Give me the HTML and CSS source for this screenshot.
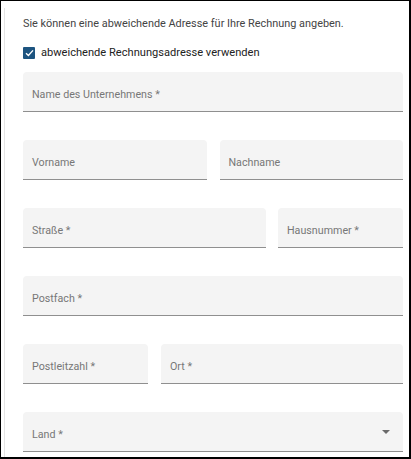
FILE: index.html
```html
<!DOCTYPE html>
<html lang="de">
<head>
    <meta charset="UTF-8">
    <meta name="viewport" content="width=device-width, initial-scale=1.0">
    <title>Rechnungsadresse</title>
    <link rel="stylesheet" href="styles.css">
</head>
<body>
    <div class="frame">
        <div class="card">
            <p class="intro">Sie können eine abweichende Adresse für Ihre Rechnung angeben.</p>
            <label class="check">
                <span class="box">
                    <svg width="9" height="8" viewBox="0 0 9 8"><path d="M1 4.2 L3.4 6.4 L8 1.4" fill="none" stroke="#fff" stroke-width="1.4"/></svg>
                </span>
                abweichende Rechnungsadresse verwenden
            </label>

            <div class="row">
                <div class="field">Name des Unternehmens *</div>
            </div>
            <div class="row half">
                <div class="field">Vorname</div>
                <div class="field">Nachname</div>
            </div>
            <div class="row street">
                <div class="field">Straße *</div>
                <div class="field">Hausnummer *</div>
            </div>
            <div class="row">
                <div class="field">Postfach *</div>
            </div>
            <div class="row city">
                <div class="field">Postleitzahl *</div>
                <div class="field">Ort *</div>
            </div>
            <div class="row">
                <div class="field select">
                    Land *
                    <span class="arrow"></span>
                </div>
            </div>
        </div>
    </div>
</body>
</html>
```

FILE: styles.css
```css
* {
    margin: 0;
    padding: 0;
    box-sizing: border-box;
}

body {
    font-family: Roboto, 'Liberation Sans', Arial, sans-serif;
    background: #fff;
}

.frame {
    width: 411px;
    height: 459px;
    border: 1px solid #000;
    border-right-width: 2px;
    border-bottom-width: 2px;
    overflow: hidden;
}

.card {
    margin: 7px 0 0 3px;
    height: 100%;
    border-left: 1px solid #e4e4e4;
    padding: 9px 6px 0 18px;
}

.intro {
    font-size: 10.9px;
    line-height: 14px;
    color: #444;
}

.check {
    display: flex;
    align-items: center;
    gap: 6px;
    margin-top: 15px;
    font-size: 11.1px;
    line-height: 14px;
    color: #222;
}

.box {
    width: 12px;
    height: 12px;
    background: #1d5480;
    border-radius: 1px;
    display: flex;
    align-items: center;
    justify-content: center;
}

.row {
    display: grid;
    grid-template-columns: 1fr;
    gap: 13px;
    margin-top: 12px;
}

.row + .row {
    margin-top: 28px;
}

.half {
    grid-template-columns: 1fr 1fr;
}

.street {
    grid-template-columns: 1fr 125px;
    gap: 12px;
}

.city {
    grid-template-columns: 125px 1fr;
}

.field {
    height: 40px;
    background: #f4f4f4;
    border-radius: 4px 4px 0 0;
    border-bottom: 1px solid #8f8f8f;
    padding: 16px 9px 0;
    font-size: 10.7px;
    line-height: 14px;
    color: #777;
    position: relative;
}

.arrow {
    position: absolute;
    right: 13px;
    top: 18px;
    border-left: 4px solid transparent;
    border-right: 4px solid transparent;
    border-top: 4px solid #6a6a6a;
}
```
